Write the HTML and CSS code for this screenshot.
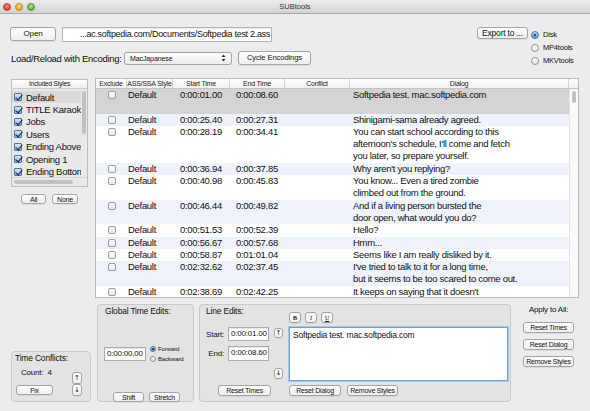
FILE: index.html
```html
<!DOCTYPE html>
<html lang="en">
<head>
    <meta charset="UTF-8">
    <meta name="viewport" content="width=device-width, initial-scale=1.0">
    <title>SUBtools</title>
    <link rel="stylesheet" href="styles.css">
</head>
<body>

<div class="titlebar">
    <div class="lights"><i class="red"></i><i class="yellow"></i><i class="green"></i></div>
    <div class="title">SUBtools</div>
    <div></div>
</div>

<!-- File / encoding / export -->
<div class="toolbar">
    <div class="tool-rows">
        <div class="row row-open">
            <button class="btn btn-open">Open</button>
            <div class="path">...ac.softpedia.com/Documents/Softpedia test 2.ass</div>
        </div>
        <div class="row row-enc">
            <span class="enc-label">Load/Reload with Encoding:</span>
            <div class="select">
                <span>MacJapanese</span>
                <svg width="5" height="8" viewBox="0 0 5 8"><path d="M0.5 3 L2.5 0.5 L4.5 3 Z M0.5 5 L2.5 7.5 L4.5 5 Z" fill="#333"/></svg>
            </div>
            <button class="btn btn-cycle">Cycle Encodings</button>
        </div>
    </div>
    <button class="btn btn-export">Export to ...</button>
    <div class="dest">
        <label class="radio"><span class="dot on"></span>Disk</label>
        <label class="radio"><span class="dot"></span>MP4tools</label>
        <label class="radio"><span class="dot"></span>MKVtools</label>
    </div>
</div>

<div class="main">
    <!-- Included styles -->
    <div class="styles-col">
        <div class="styles-list">
            <div class="sl-head">Included Styles</div>
            <div class="sl-body">
                <div class="sl-items">
                    <div class="sl-item first"><span class="cb"></span>Default</div>
                    <div class="sl-item"><span class="cb"></span>TITLE Karaoke</div>
                    <div class="sl-item"><span class="cb"></span>Jobs</div>
                    <div class="sl-item"><span class="cb"></span>Users</div>
                    <div class="sl-item"><span class="cb"></span>Ending Above</div>
                    <div class="sl-item"><span class="cb"></span>Opening 1</div>
                    <div class="sl-item"><span class="cb"></span>Ending Bottom</div>
                    <div class="sl-item"><span class="cb"></span>Insert</div>
                </div>
                <div class="vscroll"><div class="thumb sl-thumb"></div></div>
            </div>
            <div class="hscroll"><div class="hthumb"></div></div>
        </div>
        <div class="styles-btns">
            <button class="btn btn-all">All</button>
            <button class="btn btn-none">None</button>
        </div>
    </div>

    <!-- Subtitle lines -->
    <div class="table">
        <div class="thead">
            <span>Exclude</span>
            <span>ASS/SSA Style</span>
            <span>Start Time</span>
            <span>End Time</span>
            <span>Conflict</span>
            <span>Dialog</span>
            <span class="corner"></span>
        </div>
        <div class="tbody">
            <div class="rows">
                <div class="tr sel"><span class="c1"><i class="box"></i></span><span class="c2">Default</span><span class="c3">0:00:01.00</span><span class="c4">0:00:08.60</span><span></span><span class="c6">Softpedia test. mac.softpedia.com<br>&nbsp;</span></div>
                <div class="tr"><span class="c1"><i class="box"></i></span><span class="c2">Default</span><span class="c3">0:00:25.40</span><span class="c4">0:00:27.31</span><span></span><span class="c6">Shinigami-sama already agreed.</span></div>
                <div class="tr"><span class="c1"><i class="box"></i></span><span class="c2">Default</span><span class="c3">0:00:28.19</span><span class="c4">0:00:34.41</span><span></span><span class="c6">You can start school according to this<br>afternoon's schedule, I'll come and fetch<br>you later, so prepare yourself.</span></div>
                <div class="tr"><span class="c1"><i class="box"></i></span><span class="c2">Default</span><span class="c3">0:00:36.94</span><span class="c4">0:00:37.85</span><span></span><span class="c6">Why aren't you replying?</span></div>
                <div class="tr"><span class="c1"><i class="box"></i></span><span class="c2">Default</span><span class="c3">0:00:40.98</span><span class="c4">0:00:45.83</span><span></span><span class="c6">You know... Even a tired zombie<br>climbed out from the ground.</span></div>
                <div class="tr"><span class="c1"><i class="box"></i></span><span class="c2">Default</span><span class="c3">0:00:46.44</span><span class="c4">0:00:49.82</span><span></span><span class="c6">And if a living person bursted the<br>door open, what would you do?</span></div>
                <div class="tr"><span class="c1"><i class="box"></i></span><span class="c2">Default</span><span class="c3">0:00:51.53</span><span class="c4">0:00:52.39</span><span></span><span class="c6">Hello?</span></div>
                <div class="tr"><span class="c1"><i class="box"></i></span><span class="c2">Default</span><span class="c3">0:00:56.67</span><span class="c4">0:00:57.68</span><span></span><span class="c6">Hmm...</span></div>
                <div class="tr"><span class="c1"><i class="box"></i></span><span class="c2">Default</span><span class="c3">0:00:58.87</span><span class="c4">0:01:01.04</span><span></span><span class="c6">Seems like I am really disliked by it.</span></div>
                <div class="tr"><span class="c1"><i class="box"></i></span><span class="c2">Default</span><span class="c3">0:02:32.62</span><span class="c4">0:02:37.45</span><span></span><span class="c6">I've tried to talk to it for a long time,<br>but it seems to be too scared to come out.</span></div>
                <div class="tr"><span class="c1"><i class="box"></i></span><span class="c2">Default</span><span class="c3">0:02:38.69</span><span class="c4">0:02:42.25</span><span></span><span class="c6">It keeps on saying that it doesn't<br>want to go outside.</span></div>
            </div>
            <div class="vscroll table-scroll"><div class="thumb"></div></div>
        </div>
    </div>
</div>

<div class="bottom">
    <!-- Time conflicts -->
    <div class="box conflicts">
        <div class="box-title">Time Conflicts:</div>
        <div class="conf-body">
            <div class="conf-left">
                <div class="count">Count:&nbsp; 4</div>
                <button class="btn btn-fix">Fix</button>
            </div>
            <div class="arrows conf-arrows">
                <button class="btn arrow">&#8593;</button>
                <button class="btn arrow">&#8595;</button>
            </div>
        </div>
    </div>

    <!-- Global time edits -->
    <div class="box global">
        <div class="box-title gl-title">Global Time Edits:</div>
        <div class="gl-mid">
            <div class="field gl-field">0:00:00.00</div>
            <div class="gl-radios">
                <label class="radio small"><span class="dot on"></span>Forward</label>
                <label class="radio small"><span class="dot"></span>Backward</label>
            </div>
        </div>
        <div class="gl-foot">
            <button class="btn btn-shift">Shift</button>
            <button class="btn btn-stretch">Stretch</button>
        </div>
    </div>

    <!-- Line edits -->
    <div class="box line-edits">
        <div class="le-grid">
            <div class="box-title le-title">Line Edits:</div>
            <div class="biu">
                <button class="btn fmt"><b>B</b></button>
                <button class="btn fmt"><i>I</i></button>
                <button class="btn fmt"><u>U</u></button>
            </div>
            <div class="le-left">
                <div class="le-times">
                    <div class="le-row"><span class="le-label">Start:</span><div class="field le-field">0:00:01.00</div></div>
                    <div class="le-row end"><span class="le-label">End:</span><div class="field le-field">0:00:08.60</div></div>
                </div>
                <div class="nudges">
                    <button class="btn arrow nudge-up">&#8593;</button>
                    <button class="btn arrow nudge-down">&#8595;</button>
                </div>
            </div>
            <div class="editor">Softpedia test. mac.softpedia.com</div>
        </div>
        <div class="le-foot">
            <button class="btn le-reset-times">Reset Times</button>
            <button class="btn le-reset-dialog">Reset Dialog</button>
            <button class="btn le-remove">Remove Styles</button>
        </div>
    </div>

    <!-- Apply to all -->
    <div class="apply">
        <div class="apply-label">Apply to All:</div>
        <button class="btn apply-btn">Reset Times</button>
        <button class="btn apply-btn">Reset Dialog</button>
        <button class="btn apply-btn">Remove Styles</button>
    </div>
</div>

</body>
</html>
```

FILE: styles.css
```css
* {
    box-sizing: border-box;
}
body {
    margin: 0;
    width: 590px;
    height: 411px;
    overflow: hidden;
    background: #ececec;
    font-family: "Liberation Sans", Arial, sans-serif;
    font-size: 9px;
    letter-spacing: -0.2px;
    color: #111;
}
button {
    font-family: inherit;
    letter-spacing: inherit;
}
.btn {
    padding: 0;
    margin: 0;
    background: linear-gradient(#ffffff, #efefef);
    border: 1px solid #a3a3a3;
    border-radius: 3px;
    color: #111;
    font-size: 7px;
    line-height: 1;
    white-space: nowrap;
    box-shadow: 0 1px 0 rgba(0, 0, 0, 0.06);
}

/* title bar */
.titlebar {
    height: 14px;
    display: grid;
    grid-template-columns: 1fr auto 1fr;
    align-items: center;
    background: linear-gradient(#ededed, #d3d3d3);
    border-bottom: 1px solid #a7a7a7;
}
.lights {
    display: flex;
    gap: 4px;
    padding-left: 3px;
}
.lights i {
    width: 8px;
    height: 8px;
    border-radius: 50%;
}
.lights .red {
    background: radial-gradient(circle at 50% 35%, #ff8f86, #dc3e36 70%);
    border: 1px solid #bf3a33;
}
.lights .yellow {
    background: radial-gradient(circle at 50% 35%, #ffd98a, #e3a12b 70%);
    border: 1px solid #c48a22;
}
.lights .green {
    background: radial-gradient(circle at 50% 35%, #b4ec8a, #5db63b 70%);
    border: 1px solid #4e9a31;
}
.title {
    font-size: 7.5px;
    letter-spacing: 0;
    color: #333;
}

/* toolbar */
.toolbar {
    display: flex;
    height: 64px;
}
.tool-rows {
    padding: 13px 0 0 10px;
    width: 330px;
}
.row {
    display: flex;
    align-items: center;
}
.row-open {
    height: 14px;
}
.btn-open {
    width: 46px;
    height: 14px;
    font-size: 8px;
    letter-spacing: -0.1px;
}
.path {
    margin-left: 6px;
    width: 210px;
    height: 15px;
    background: #fff;
    border: 1px solid #b4b4b4;
    box-shadow: inset 0 1px 1px rgba(0, 0, 0, 0.08);
    font-size: 9px;
    letter-spacing: -0.3px;
    line-height: 13px;
    text-align: right;
    padding-right: 1px;
    overflow: hidden;
    white-space: nowrap;
}
.row-enc {
    margin-top: 10px;
    height: 14px;
}
.enc-label {
    width: 114px;
    padding-left: 1px;
    font-size: 9.5px;
    letter-spacing: -0.3px;
    white-space: nowrap;
}
.select {
    width: 108px;
    height: 13px;
    display: flex;
    align-items: center;
    justify-content: space-between;
    padding: 0 5px;
    background: linear-gradient(#ffffff, #ededed);
    border: 1px solid #a3a3a3;
    border-radius: 3px;
    font-size: 7px;
    letter-spacing: -0.1px;
}
.btn-cycle {
    margin-left: 6px;
    width: 73px;
    height: 14px;
    font-size: 7.6px;
    letter-spacing: -0.1px;
}
.btn-export {
    margin: 13px 3px 0 auto;
    width: 51px;
    height: 12px;
    font-size: 8.5px;
}
.dest {
    margin-top: 14px;
    width: 59px;
}
.radio {
    display: flex;
    align-items: center;
    height: 13px;
    font-size: 7.5px;
    white-space: nowrap;
}
.dot {
    flex: none;
    width: 8px;
    height: 8px;
    margin-right: 4px;
    border-radius: 50%;
    border: 1px solid #8e8e8e;
    background: linear-gradient(#ffffff, #e6e6e6);
    position: relative;
}
.dot.on {
    border-color: #4a78b5;
    background: linear-gradient(#b9d4f3, #5c95db);
}
.dot.on::after {
    content: "";
    position: absolute;
    left: 2px;
    top: 2px;
    width: 2px;
    height: 2px;
    border-radius: 50%;
    background: #12233a;
}

/* main area */
.main {
    display: flex;
    height: 220px;
    padding-left: 11px;
}
.styles-col {
    width: 77px;
    margin-top: 1px;
}
.styles-list {
    height: 108px;
    border: 1px solid #bdbdbd;
    background: #e9e9e9;
    display: flex;
    flex-direction: column;
}
.sl-head {
    height: 9px;
    background: linear-gradient(#ffffff, #eeeeee);
    border-bottom: 1px solid #cdcdcd;
    font-size: 6.5px;
    line-height: 8px;
    text-align: center;
    white-space: nowrap;
}
.sl-body {
    flex: 1;
    display: flex;
    overflow: hidden;
}
.sl-items {
    flex: 1;
    padding-top: 2px;
    overflow: hidden;
}
.sl-item {
    display: flex;
    align-items: center;
    height: 12.4px;
    padding-left: 2px;
    font-size: 9.5px;
    letter-spacing: -0.3px;
    white-space: nowrap;
}
.sl-item.first {
    background: #dadada;
}
.cb {
    flex: none;
    width: 8px;
    height: 8px;
    margin-right: 4px;
    border: 1px solid #4c74ab;
    border-radius: 1px;
    background: linear-gradient(#d9e8f8, #8cb3e4);
    position: relative;
}
.cb::after {
    content: "";
    position: absolute;
    left: 2px;
    top: -1px;
    width: 3px;
    height: 6px;
    border: solid #10233e;
    border-width: 0 1.5px 1.5px 0;
    transform: rotate(40deg);
}
.vscroll {
    width: 6px;
    padding: 2px 1px;
}
.thumb {
    height: 12px;
    border-radius: 3px;
    background: #c1c1c1;
}
.sl-thumb {
    height: 43px;
}
.hscroll {
    height: 9px;
    padding: 2px 14px 0 2px;
    border-top: 1px solid #d3d3d3;
}
.hthumb {
    height: 4px;
    border-radius: 2px;
    background: #c1c1c1;
}
.styles-btns {
    display: flex;
    gap: 6px;
    padding-left: 10px;
    margin-top: 7px;
}
.btn-all {
    width: 25px;
    height: 10px;
}
.btn-none {
    width: 26px;
    height: 10px;
}

/* subtitle table */
.table {
    margin-left: 7px;
    width: 484px;
    height: 220px;
    border: 1px solid #b8b8b8;
    background: #fff;
    display: flex;
    flex-direction: column;
}
.thead {
    height: 10px;
    display: grid;
    grid-template-columns: 31px 46px 57px 55px 65px 1fr 9px;
    background: linear-gradient(#ffffff, #f0f0f0);
    border-bottom: 1px solid #c3c3c3;
    font-size: 7px;
    line-height: 9px;
    text-align: center;
    color: #222;
}
.thead span {
    border-right: 1px solid #d2d2d2;
    white-space: nowrap;
    overflow: hidden;
}
.thead .corner {
    border-right: none;
}
.tbody {
    flex: 1;
    display: flex;
    overflow: hidden;
}
.rows {
    flex: 1;
    overflow: hidden;
}
.tr {
    display: grid;
    grid-template-columns: 31px 46px 57px 55px 65px 1fr;
    font-size: 9.5px;
    letter-spacing: -0.3px;
    line-height: 12.3px;
    white-space: nowrap;
}
.tr:nth-child(even) {
    background: #eef3fb;
}
.tr.sel {
    background: #d4d4d4;
}
.c1 {
    display: flex;
    justify-content: center;
    padding-top: 2px;
}
.box {
    display: block;
    width: 8px;
    height: 8px;
    border: 1px solid #9c9c9c;
    border-radius: 2px;
    background: linear-gradient(#ffffff, #e8e8e8);
}
.c2 {
    padding-left: 1px;
}
.c3 {
    padding-left: 7px;
}
.c4 {
    padding-left: 6px;
}
.c6 {
    padding-left: 3px;
}
.table-scroll {
    width: 9px;
    padding: 2px;
    background: #fafafa;
    border-left: 1px solid #e4e4e4;
}

/* bottom panels */
.bottom {
    display: flex;
    align-items: flex-start;
    height: 113px;
    padding-left: 11px;
}
.bottom .box {
    background: #e3e3e3;
    border: 1px solid #c9c9c9;
    border-radius: 4px;
}
.box-title {
    height: 12px;
    line-height: 12px;
    padding-left: 3px;
    font-size: 8.5px;
    white-space: nowrap;
}
.field {
    background: #fff;
    border: 1px solid #ababab;
    box-shadow: inset 0 1px 1px rgba(0, 0, 0, 0.1);
    font-size: 8px;
    line-height: 12px;
    padding-left: 2px;
    white-space: nowrap;
}
.arrow {
    width: 10px;
    font-size: 7px;
    font-family: "DejaVu Sans", sans-serif;
    letter-spacing: 0;
}

.conflicts {
    margin-top: 53px;
    width: 80px;
    height: 51px;
}
.conf-body {
    display: flex;
    padding-left: 4px;
}
.conf-left {
    width: 37px;
}
.count {
    margin-top: 3px;
    padding-left: 5px;
    height: 12px;
    line-height: 12px;
    font-size: 8px;
    white-space: nowrap;
}
.btn-fix {
    margin-top: 6px;
    width: 37px;
    height: 10px;
}
.conf-arrows {
    display: flex;
    flex-direction: column;
    margin-left: 19px;
    margin-top: 8px;
}
.conf-arrows .arrow {
    height: 12px;
}

.global {
    margin-left: 6px;
    margin-top: 6px;
    width: 97px;
    height: 98px;
}
.gl-title {
    padding-left: 7px;
}
.gl-mid {
    display: flex;
    align-items: center;
    margin-top: 27px;
    padding-left: 6px;
}
.gl-field {
    width: 42px;
    height: 14px;
}
.gl-radios {
    margin-left: 4px;
}
.radio.small {
    height: 10px;
    font-size: 6px;
    letter-spacing: -0.1px;
}
.radio.small .dot {
    width: 6px;
    height: 6px;
    margin-right: 2px;
}
.radio.small .dot.on::after {
    left: 1px;
    top: 1px;
}
.gl-foot {
    display: flex;
    gap: 5px;
    margin-top: 28px;
    padding-left: 15px;
}
.btn-shift,
.btn-stretch {
    width: 31px;
    height: 10px;
}

.line-edits {
    margin-left: 5px;
    margin-top: 6px;
    width: 312px;
    height: 98px;
}
.le-grid {
    display: grid;
    grid-template-columns: 89px 220px;
    grid-template-rows: 22px 54px;
}
.le-title {
    padding-left: 6px;
}
.biu {
    display: flex;
    gap: 4px;
    margin-top: 7px;
}
.fmt {
    width: 12px;
    height: 11px;
    font-family: "Liberation Serif", serif;
    font-size: 6px;
}
.le-left {
    display: flex;
}
.le-times {
    width: 70px;
}
.le-row {
    display: flex;
    align-items: center;
    height: 14px;
}
.le-row.end {
    margin-top: 5px;
    height: 15px;
}
.le-label {
    width: 24px;
    margin-right: 4px;
    text-align: right;
    font-size: 8px;
}
.le-field {
    width: 41px;
    height: 100%;
}
.nudges {
    display: flex;
    flex-direction: column;
    justify-content: space-between;
    margin-left: 4px;
    margin-top: 1px;
    height: 51px;
}
.nudge-up {
    width: 9px;
    height: 10px;
}
.nudge-down {
    width: 9px;
    height: 11px;
}
.editor {
    width: 219px;
    height: 54px;
    background: #fff;
    border: 1px solid #6f9fd8;
    box-shadow: 0 0 0 1px #a9c7ec;
    padding: 1px 3px;
    font-size: 8.5px;
    line-height: 12px;
}
.le-foot {
    display: flex;
    margin-top: 4px;
}
.le-reset-times {
    margin-left: 18px;
    width: 53px;
    height: 11px;
}
.le-reset-dialog {
    margin-left: 18px;
    width: 52px;
    height: 11px;
}
.le-remove {
    margin-left: 6px;
    width: 51px;
    height: 11px;
}

.apply {
    margin-top: 6px;
    margin-left: 12px;
    width: 51px;
    display: flex;
    flex-direction: column;
    gap: 6px;
}
.apply-label {
    height: 12px;
    line-height: 12px;
    text-align: center;
    font-size: 8px;
    white-space: nowrap;
}
.apply-btn {
    width: 51px;
    height: 11px;
}
```
